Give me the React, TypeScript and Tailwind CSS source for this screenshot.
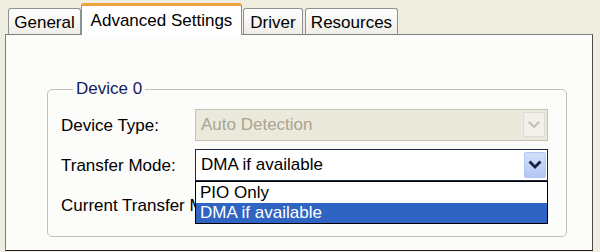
import React from 'react';

const Chevron = ({ color, width }: { color: string; width: number }) => (
  <svg width="14" height="10" viewBox="0 0 14 10" fill="none">
    <path d="M2.5 2.5 L7 7 L11.5 2.5" stroke={color} strokeWidth={width} strokeLinecap="square" />
  </svg>
);

const Tab = ({ label, width, active }: { label: string; width: string; active?: boolean }) =>
  active ? (
    <div
      className={`${width} h-[32px] -mb-px flex items-center justify-center bg-white border border-b-0 border-[#8c9394] border-t-[3px] border-t-[#eda23c] rounded-t-[3px]`}
    >
      {label}
    </div>
  ) : (
    <div
      className={`${width} h-[26px] pt-[2px] flex items-center justify-center border border-b-0 border-[#8c9394] rounded-t-[3px] bg-gradient-to-b from-white to-[#eeede6]`}
    >
      {label}
    </div>
  );

export default function App() {
  return (
    <div className="w-[600px] h-[252px] bg-[#efece0] text-[17px] text-black font-['Liberation_Sans',Arial,sans-serif] overflow-hidden">
      <div className="relative z-10 flex items-end h-[34px] pl-[8px]">
        <Tab label="General" width="w-[73px]" />
        <Tab label="Advanced Settings" width="w-[161px]" active />
        <div className="w-px" />
        <Tab label="Driver" width="w-[60px]" />
        <div className="w-[2px]" />
        <Tab label="Resources" width="w-[93px]" />
      </div>

      <div className="ml-[5px] w-[588px] h-[217px] border border-[#7b7f80] border-r-[#4a4a4a] border-b-[#1e1e1e] bg-[#fcfcfb]">
        <fieldset className="ml-[41px] w-[520px] mt-[44px] border border-[#c2c1b6] rounded-[5px] pl-[13px] pr-[18px] pt-[10px] pb-[15px]">
          <legend className="ml-[12px] px-[3px] leading-[20px] text-[#14205e]">Device 0</legend>
          <div className="grid grid-cols-[134px_353px] gap-y-[8px]">
            <div className="h-[32px] pt-[2px] flex items-center whitespace-nowrap">Device Type:</div>
            <div className="relative h-[32px] border border-[#c5c2b2] bg-[#ebe9dc] flex items-center px-[5px] text-[#a8a592]">
              Auto Detection
              <div className="absolute right-[2px] top-[2px] bottom-[3px] w-[22px] rounded-[2px] border border-[#dcdbd2] bg-[#f1f0ea] flex items-center justify-center">
                <Chevron color="#c3c1b4" width={2.2} />
              </div>
            </div>

            <div className="h-[32px] pt-[2px] flex items-center whitespace-nowrap">Transfer Mode:</div>
            <div className="relative h-[32px]">
              <div className="h-full border border-[#1d2a45] bg-white flex items-center px-[5px]">
                DMA if available
                <div className="absolute right-[2px] top-[3px] bottom-[3px] w-[22px] rounded-[2px] border border-[#b3c6f2] bg-gradient-to-b from-[#d2dffb] to-[#b3c7f5] flex items-center justify-center">
                  <Chevron color="#15203f" width={2.8} />
                </div>
              </div>
              <ul className="absolute z-20 top-full left-0 right-0 border border-black bg-white">
                <li className="h-[21px] flex items-center px-[4px]">PIO Only</li>
                <li className="h-[20px] flex items-center px-[4px] bg-[#2f64c2] text-white">DMA if available</li>
              </ul>
            </div>

            <div className="h-[32px] pt-[2px] flex items-center whitespace-nowrap overflow-hidden">Current Transfer Mode:</div>
            <div className="h-[32px]" />
          </div>
        </fieldset>
      </div>
    </div>
  );
}
